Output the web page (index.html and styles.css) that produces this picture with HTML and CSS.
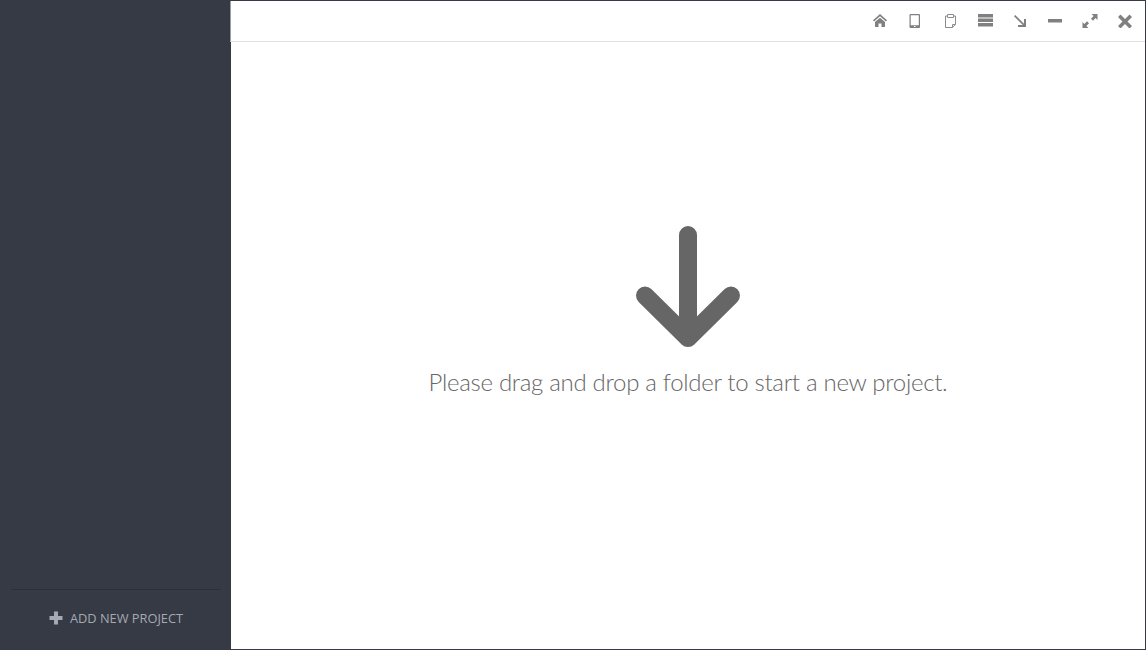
FILE: index.html
```html
<!DOCTYPE html>
<html lang="en">
<head>
    <meta charset="UTF-8">
    <meta name="viewport" content="width=device-width, initial-scale=1.0">
    <title>Projects</title>
    <link rel="stylesheet" href="styles.css">
</head>
<body>
    <div class="app">
        <aside class="sidebar">
            <div class="sidebar-footer">
                <button class="add-project">
                    <svg width="14" height="14" viewBox="0 0 14 14"><path d="M5 0.500h4v4.500H13.500v4H9v4.500H5V9H0.500V5H5z"/></svg>
                    <span>ADD NEW PROJECT</span>
                </button>
            </div>
        </aside>
        <main class="main">
            <header class="toolbar">
                <!-- home -->
                <svg class="icon" viewBox="0 0 16 14"><path d="M8 0 L1 6.300 L2 7.500 L8 2.300 L14 7.500 L15 6.300 Z M3 8 L8 3.700 L13 8 V13 H9.500 V9.500 H6.500 V13 H3 Z"/></svg>
                <!-- phone -->
                <svg class="icon" viewBox="0 0 16 14"><path fill-rule="evenodd" d="M3.500 0h8.500a1 1 0 0 1 1 1v12a1 1 0 0 1-1 1H3.500a1 1 0 0 1-1-1V1a1 1 0 0 1 1-1zM3.700 1.200v10.100h8.100V1.200zM7 12v1h1.500v-1z"/></svg>
                <!-- clipboard -->
                <svg class="icon thin" viewBox="0 0 16 14"><path d="M5.500 2H3.500V13.500H10.500L13.500 10.500V2H11.500M5.500 0.500H11.500V3.500H5.500ZM10.500 13.500V10.500H13.500"/></svg>
                <!-- list -->
                <svg class="icon" viewBox="0 0 16 14"><path d="M1 0h15v3.500H1zM1 4.500h15v3.500H1zM1 9h15v3.500H1z"/></svg>
                <!-- arrow down right -->
                <svg class="icon" viewBox="0 0 16 14"><path d="M3.200 1 L12 9.800 V5 H14 V13 H6 V11 H10.800 L2 2.200 Z"/></svg>
                <!-- minimize -->
                <svg class="icon" viewBox="0 0 16 14"><path d="M1 5h14v3.500H1z"/></svg>
                <!-- expand -->
                <svg class="icon" viewBox="0 0 16 14"><path d="M9.500 0H15.500V6L13.600 4.100 L11 6.700 L9 4.700 L11.600 2.100 ZM6.500 14H0.500V8L2.400 9.900 L5 7.300 L7 9.300 L4.400 11.900 Z"/></svg>
                <!-- close -->
                <svg class="icon" viewBox="0 0 16 14"><path d="M3.500 0.500 L8 5 L12.500 0.500 L15 3 L10.500 7.500 L15 12 L12.500 14.500 L8 10 L3.500 14.500 L1 12 L5.500 7.500 L1 3 Z"/></svg>
            </header>
            <section class="dropzone">
                <svg class="drop-arrow" width="104" height="122" viewBox="0 0 104 122">
                    <path d="M52 9V112M9 69.500L52 112L95 69.500"/>
                </svg>
                <p class="drop-text">Please drag and drop a folder to start a new project.</p>
            </section>
        </main>
    </div>
</body>
</html>
```

FILE: styles.css
```css
html, body {
    margin: 0;
    height: 100%;
}
body {
    font-family: "Lato", "Open Sans", sans-serif;
    background: #353a45;
    overflow: hidden;
}
.app {
    display: flex;
    height: 650px;
    box-sizing: border-box;
    padding: 1px 1px 1px 0;
}
.sidebar {
    width: 231px;
    display: flex;
    flex-direction: column;
    justify-content: flex-end;
    flex-shrink: 0;
}
.sidebar-footer {
    margin: 0 10px 0 11px;
    height: 59px;
    border-top: 1px solid #2b2f38;
}
.add-project {
    display: flex;
    align-items: center;
    justify-content: center;
    gap: 7px;
    width: 100%;
    height: 55px;
    padding: 0;
    border: none;
    background: none;
    color: #a5a9b1;
    font-family: "Open Sans", sans-serif;
    font-size: 12.8px;
}
.add-project svg {
    fill: #a5a9b1;
}
.main {
    flex: 1;
    display: flex;
    flex-direction: column;
    background: #ffffff;
}
.toolbar {
    display: flex;
    align-items: center;
    justify-content: flex-end;
    gap: 19px;
    height: 40px;
    margin-left: -1px;
    padding: 0 12px 0 0;
    background: #ffffff;
    border-left: 1px solid #9a9da3;
    border-bottom: 1px solid #dfe1e1;
    flex-shrink: 0;
}
.icon {
    width: 16px;
    height: 14px;
    fill: #808080;
}
.icon.thin {
    fill: none;
    stroke: #8c8c8c;
    stroke-width: 1px;
}
.dropzone {
    flex: 1;
    display: flex;
    flex-direction: column;
    align-items: center;
    padding-top: 184px;
}
.drop-arrow {
    fill: none;
    stroke: #666666;
    stroke-width: 18px;
    stroke-linecap: round;
    stroke-linejoin: round;
}
.drop-text {
    margin: 19px 0 0;
    font-size: 24px;
    font-weight: 300;
    letter-spacing: -0.3px;
    line-height: 30px;
    color: #666666;
}
```
